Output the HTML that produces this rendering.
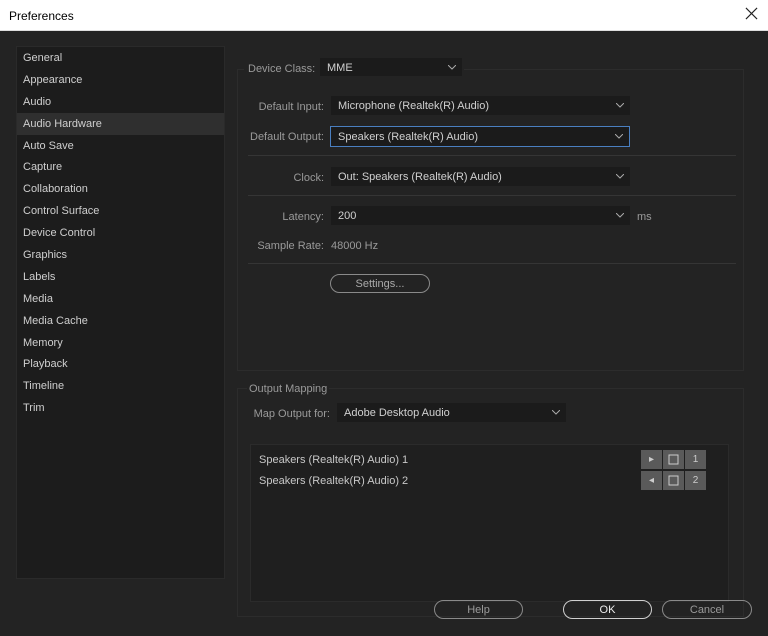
<!DOCTYPE html>
<html><head><meta charset="utf-8"><style>
*{margin:0;padding:0;box-sizing:border-box}
body{width:768px;height:636px;background:#232323;font-family:"Liberation Sans",sans-serif;font-size:11px;color:#c8c8c8;position:relative;overflow:hidden}
.abs{position:absolute}
.title{left:0;top:0;width:768px;height:31px;background:#fff;color:#000;font-size:12px;border-bottom:1px solid #ddd}
.title span{position:absolute;left:9px;top:9px}
.close{position:absolute;right:10px;top:7px;width:13px;height:13px}
.side{left:16px;top:46px;width:209px;height:533px;background:#1c1c1c;border:1px solid #2a2a2a}
.side div{height:21.9px;line-height:23px;padding-left:6px;color:#cfcfcf}
.side .sel{background:#2f2f2f}
.panel{border:1px solid #2c2c2c}
.lbl{color:#9a9a9a;text-align:right}
.dd{background:#1b1b1b;height:19px;line-height:21px;padding-left:7px;color:#d0d0d0}
.dd svg{position:absolute;right:6px;top:7px}
.hr{height:1px;background:#353535}
.btn{border:1px solid #8a8a8a;border-radius:10px;height:19px;line-height:18px;text-align:center;color:#9a9a9a}
.ic{width:21px;height:19px;background:#5a5a5a;color:#ccc;text-align:center;line-height:19px;font-size:10px}
</style></head><body>
<div class="abs title"><span>Preferences</span>
<svg class="close" viewBox="0 0 14 14"><path d="M1 1L13 13M13 1L1 13" stroke="#222" stroke-width="1.2"/></svg></div>
<div class="abs side">
<div>General</div><div>Appearance</div><div>Audio</div><div class="sel">Audio Hardware</div><div>Auto Save</div><div>Capture</div><div>Collaboration</div><div>Control Surface</div><div>Device Control</div><div>Graphics</div><div>Labels</div><div>Media</div><div>Media Cache</div><div>Memory</div><div>Playback</div><div>Timeline</div><div>Trim</div>
</div>
<div class="abs panel" style="left:237px;top:69px;width:507px;height:302px"></div>
<div class="abs" style="left:244px;top:59px;width:220px;height:20px;background:#232323"></div>
<div class="abs lbl" style="left:248px;top:63px;color:#9a9a9a">Device Class:</div>
<div class="abs dd" style="left:320px;top:58px;width:142px;height:18px;line-height:20px">MME<svg width="8" height="5"><path d="M0 0L4 4L8 0" stroke="#aaa" fill="none"/></svg></div>
<div class="abs lbl" style="left:230px;top:101px;width:94px">Default Input:</div>
<div class="abs dd" style="left:331px;top:96px;width:299px">Microphone (Realtek(R) Audio)<svg width="8" height="5"><path d="M0 0L4 4L8 0" stroke="#aaa" fill="none"/></svg></div>
<div class="abs lbl" style="left:230px;top:131px;width:94px">Default Output:</div>
<div class="abs dd" style="left:330px;top:126px;width:300px;height:21px;border:1px solid #4a7fc0">Speakers (Realtek(R) Audio)<svg width="8" height="5"><path d="M0 0L4 4L8 0" stroke="#aaa" fill="none"/></svg></div>
<div class="abs hr" style="left:248px;top:155px;width:488px"></div>
<div class="abs lbl" style="left:230px;top:172px;width:94px">Clock:</div>
<div class="abs dd" style="left:331px;top:167px;width:299px">Out: Speakers (Realtek(R) Audio)<svg width="8" height="5"><path d="M0 0L4 4L8 0" stroke="#aaa" fill="none"/></svg></div>
<div class="abs hr" style="left:248px;top:195px;width:488px"></div>
<div class="abs lbl" style="left:230px;top:211px;width:94px">Latency:</div>
<div class="abs dd" style="left:331px;top:206px;width:299px">200<svg width="8" height="5"><path d="M0 0L4 4L8 0" stroke="#aaa" fill="none"/></svg></div>
<div class="abs" style="left:637px;top:211px;color:#9a9a9a">ms</div>
<div class="abs lbl" style="left:230px;top:240px;width:94px">Sample Rate:</div>
<div class="abs" style="left:331px;top:240px;color:#9a9a9a">48000 Hz</div>
<div class="abs hr" style="left:248px;top:263px;width:488px"></div>
<div class="abs btn" style="left:330px;top:274px;width:100px;color:#aaa">Settings...</div>

<div class="abs panel" style="left:237px;top:388px;width:507px;height:229px"></div>
<div class="abs" style="left:247px;top:383px;color:#9a9a9a;background:#232323;padding:0 2px">Output Mapping</div>
<div class="abs lbl" style="left:240px;top:408px;width:90px">Map Output for:</div>
<div class="abs dd" style="left:337px;top:403px;width:229px">Adobe Desktop Audio<svg width="8" height="5"><path d="M0 0L4 4L8 0" stroke="#aaa" fill="none"/></svg></div>
<div class="abs" style="left:250px;top:444px;width:479px;height:158px;background:#1f1f1f;border:1px solid #2b2b2b"></div>
<div class="abs" style="left:259px;top:454px">Speakers (Realtek(R) Audio) 1</div>
<div class="abs" style="left:259px;top:475px">Speakers (Realtek(R) Audio) 2</div>
<div class="abs ic" style="left:641px;top:450px">▸</div>
<div class="abs ic" style="left:663px;top:450px"><svg width="13" height="13" style="margin-top:3px"><rect x="2" y="2" width="9" height="9" fill="none" stroke="#ccc"/></svg></div>
<div class="abs ic" style="left:685px;top:450px">1</div>
<div class="abs ic" style="left:641px;top:471px">◂</div>
<div class="abs ic" style="left:663px;top:471px"><svg width="13" height="13" style="margin-top:3px"><rect x="2" y="2" width="9" height="9" fill="none" stroke="#ccc"/></svg></div>
<div class="abs ic" style="left:685px;top:471px">2</div>
<div class="abs btn" style="left:434px;top:600px;width:89px">Help</div>
<div class="abs btn" style="left:563px;top:600px;width:89px;border-color:#d0d0d0;color:#eee">OK</div>
<div class="abs btn" style="left:662px;top:600px;width:90px">Cancel</div>
</body></html>
